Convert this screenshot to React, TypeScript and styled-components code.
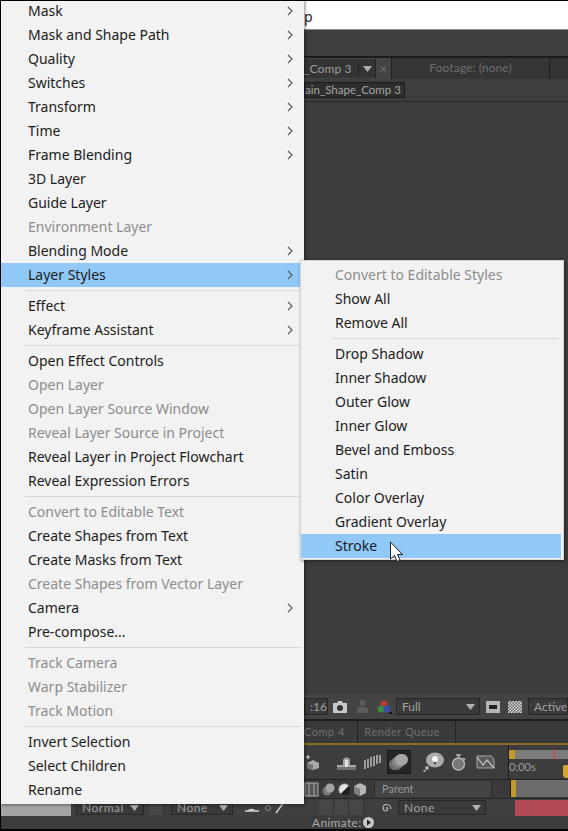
import styled, { createGlobalStyle } from 'styled-components';

const GlobalStyle = createGlobalStyle`
  html, body {
    margin: 0;
    padding: 0;
    background: #3c3c3c;
  }
`;

const Page = styled.div`
  position: relative;
  display: flex;
  flex-direction: column;
  width: 568px;
  height: 831px;
  overflow: hidden;
  background: #3c3c3c;
  font-family: Lato, "Liberation Sans", sans-serif;
  color: #a8a8a8;

  &::after {
    content: "";
    position: absolute;
    inset: 0;
    border-style: solid;
    border-color: #000;
    border-width: 1px 0 2px 1px;
    pointer-events: none;
  }
`;

const TitleBar = styled.div`
  height: 30px;
  padding-left: 304px;
  box-sizing: border-box;
  background: #fff;
  border-bottom: 1px solid #8a8a8a;
  color: #222;
  font-family: "Noto Sans", sans-serif;
  font-size: 14px;
  line-height: 33px;
`;

const PanelStrip = styled.div`
  height: 26px;
  background: #3e3e3e;
  border-bottom: 2px solid #1c1c1c;
`;

const ViewerTabs = styled.div`
  display: flex;
  align-items: stretch;
  height: 21px;
  padding-left: 304px;
  background: #333;
  font-size: 12px;
  letter-spacing: 0.1px;
`;

const ActiveTab = styled.div`
  display: flex;
  align-items: center;
  width: 87px;
  background: #444;
`;

const TabButton = styled.div`
  display: flex;
  align-items: center;
  width: 72px;
  height: 19px;
  background: #343434;
  border-right: 1px solid #222;
  box-sizing: border-box;
  color: #9c9c9c;
`;

const TabName = styled.span`
  width: 44px;
  text-align: right;
  white-space: nowrap;
`;

const TabCaret = styled.span`
  display: flex;
  align-items: center;
  justify-content: center;
  width: 17px;
  height: 12px;
  margin-left: 10px;
  border-left: 1px solid #222;
`;

const TabClose = styled.span`
  margin-left: 4px;
  color: #777;
  font-size: 12px;
`;

const FootageTab = styled.div`
  width: 157px;
  background: #353535;
  border-left: 1px solid #1e1e1e;
  border-right: 1px solid #1e1e1e;
  color: #6d6d6d;
  text-align: center;
  line-height: 20px;
`;

const CrumbRow = styled.div`
  display: flex;
  align-items: center;
  height: 22px;
  padding-left: 304px;
  background: #3e3e3e;
  border-bottom: 1px solid #2b2b2b;
`;

const Crumb = styled.div`
  width: 101px;
  height: 16px;
  box-sizing: border-box;
  padding-right: 7px;
  background: #2e2e2e;
  border: 1px solid #1d1d1d;
  color: #a4a4a4;
  font-size: 11.5px;
  line-height: 13px;
  text-align: right;
  white-space: nowrap;
`;

const Viewer = styled.div`
  flex: 1;
  background: #3c3c3c;
`;

const ViewerBar = styled.div`
  display: flex;
  align-items: center;
  height: 25px;
  padding-left: 304px;
  background: #434343;
  border-bottom: 2px solid #1e1e1e;
  font-size: 12px;
`;

const DarkBox = styled.div<{ $w: number; $ml?: number }>`
  display: flex;
  align-items: center;
  justify-content: space-between;
  width: ${(p) => p.$w}px;
  height: 17px;
  margin-left: ${(p) => p.$ml ?? 0}px;
  box-sizing: border-box;
  padding: 0 4px 0 5px;
  background: #3a3a3a;
  border: 1px solid #272727;
  color: #a0a0a0;
  flex-shrink: 0;
`;

const Slot = styled.span<{ $ml: number }>`
  display: flex;
  flex-shrink: 0;
  margin-left: ${(p) => p.$ml}px;
`;

const BottomTabs = styled.div`
  display: flex;
  align-items: center;
  height: 22px;
  padding-left: 304px;
  background: #3a3a3a;
  border-bottom: 2px solid #8e6b2c;
  color: #6f6f6f;
  font-size: 11px;
  letter-spacing: 0.5px;
`;

const BottomTab = styled.span<{ $w: number }>`
  width: ${(p) => p.$w}px;
  height: 100%;
  box-sizing: border-box;
  flex-shrink: 0;
  border-right: 1px solid #232323;
  line-height: 22px;
  text-align: right;
  padding-right: 15px;
  white-space: nowrap;
`;

const TimelineTools = styled.div`
  display: flex;
  align-items: stretch;
  height: 34px;
  padding-left: 304px;
  background: #3d3d3d;
  border-bottom: 1px solid #222;
`;

const ToolIcons = styled.div`
  display: flex;
  align-items: center;
  width: 204px;
  flex-shrink: 0;
  border-right: 1px solid #1d1d1d;
`;

const ActiveTool = styled.div`
  display: flex;
  align-items: center;
  justify-content: center;
  width: 24px;
  height: 24px;
  margin-left: 5px;
  background: #262626;
  border: 1px solid #1a1a1a;
  box-sizing: border-box;
`;

const Ruler = styled.div`
  position: relative;
  flex: 1;
  display: flex;
  flex-direction: column;
`;

const RulerBar = styled.div`
  display: flex;
  height: 9px;
  margin-top: 5px;
  background: #7c7c7c;
`;

const Handle = styled.div<{ $w: number }>`
  width: ${(p) => p.$w}px;
  background: #c29a2a;
  flex-shrink: 0;
`;

const PlayMark = styled.div`
  margin-left: 38px;
  width: 2px;
  background: #b9545a;
`;

const TimeLabel = styled.span`
  margin-top: 1px;
  color: #9d9d9d;
  font-size: 11px;
`;

const Marker = styled.div`
  position: absolute;
  right: -2px;
  top: 20px;
  width: 7px;
  height: 13px;
  background: #d6a52c;
  border-radius: 3px 3px 5px 5px;
`;

const HeaderRow = styled.div`
  display: flex;
  align-items: stretch;
  height: 18px;
  padding-left: 304px;
  background: #3a3a3a;
  border-bottom: 1px solid #262626;
`;

const Switches = styled.div`
  display: flex;
  align-items: center;
  gap: 3px;
  width: 70px;
  flex-shrink: 0;
`;

const ParentLabel = styled.div`
  width: 118px;
  flex-shrink: 0;
  margin: 1px 16px 1px 0;
  padding-left: 7px;
  box-sizing: border-box;
  background: #444;
  border-left: 1px solid #2a2a2a;
  border-right: 1px solid #2a2a2a;
  color: #9a9a9a;
  font-size: 11px;
  line-height: 16px;
`;

const TrackHead = styled.div`
  flex: 1;
  display: flex;
  margin: 0 0 1px 2px;
  background: #6c6c6c;
  border-left: 1px solid #1c1c1c;
`;

const LayerRow = styled.div`
  display: flex;
  align-items: center;
  height: 17px;
  background: #3f3f3f;
`;

const LayerGrey = styled.div`
  width: 71px;
  height: 100%;
  background: #a4a4a4;
  flex-shrink: 0;
`;

const LayerBox = styled(DarkBox)`
  height: 15px;
  font-size: 12px;
  letter-spacing: 0.5px;
`;

const Check = styled.span`
  width: 14px;
  height: 15px;
  flex-shrink: 0;
  background: #474747;
  border-right: 1px solid #333;
`;

const Squares = styled.div`
  display: flex;
  margin-left: 33px;
`;

const Clip = styled.div`
  flex: 1;
  height: 16px;
  margin-left: 29px;
  background: #b24a55;
`;

const AnimateRow = styled.div`
  display: flex;
  align-items: center;
  height: 13px;
  margin-bottom: 2px;
  padding-left: 312px;
  background: #3c3c3c;
  color: #a8a8a8;
  font-size: 12px;
  letter-spacing: 0.3px;
  gap: 2px;
`;

const Menu = styled.div`
  position: absolute;
  display: flex;
  flex-direction: column;
  box-sizing: border-box;
  background: #f2f2f2;
  font-family: "Noto Sans", "Open Sans", sans-serif;
  font-size: 14px;
  box-shadow: 1px 1px 3px rgba(0, 0, 0, 0.45);
`;

const MainMenu = styled(Menu)`
  left: 1px;
  top: -1px;
  width: 303px;
  height: 805px;
`;

const SubMenu = styled(Menu)`
  left: 300px;
  top: 260px;
  width: 264px;
  height: 300px;
  padding: 2px 2px 0 0;
  border: 1px solid #d4d4d4;
`;

const Row = styled.div<{ $disabled?: boolean; $active?: boolean; $pad: number }>`
  display: flex;
  align-items: center;
  justify-content: space-between;
  flex-shrink: 0;
  box-sizing: border-box;
  height: 24px;
  padding: 0 11px 1px ${(p) => p.$pad}px;
  background: ${(p) => (p.$active ? '#90c8f7' : 'transparent')};
  color: ${(p) => (p.$disabled ? '#8d8d8d' : '#1c1c1c')};
  white-space: nowrap;
`;

const Separator = styled.div<{ $ml: number }>`
  height: 1px;
  margin: 3px 2px 3px ${(p) => p.$ml}px;
  background: #d9d9d9;
`;

const Cursor = styled.svg`
  position: absolute;
  left: 389px;
  top: 541px;
`;

const Chevron = () => (
  <svg width="6" height="10" viewBox="0 0 6 10">
    <path d="M1 1l4 4-4 4" fill="none" stroke="#555" strokeWidth="1.1" />
  </svg>
);

const Caret = ({ color = '#b0b0b0' }: { color?: string }) => (
  <svg width="9" height="6" viewBox="0 0 9 6">
    <path d="M0 0h9L4.5 6z" fill={color} />
  </svg>
);

type MenuItem = { label: string; disabled?: boolean; sub?: boolean; active?: boolean } | 'sep';

const mainItems: MenuItem[] = [
  { label: 'Mask', sub: true },
  { label: 'Mask and Shape Path', sub: true },
  { label: 'Quality', sub: true },
  { label: 'Switches', sub: true },
  { label: 'Transform', sub: true },
  { label: 'Time', sub: true },
  { label: 'Frame Blending', sub: true },
  { label: '3D Layer' },
  { label: 'Guide Layer' },
  { label: 'Environment Layer', disabled: true },
  { label: 'Blending Mode', sub: true },
  { label: 'Layer Styles', sub: true, active: true },
  'sep',
  { label: 'Effect', sub: true },
  { label: 'Keyframe Assistant', sub: true },
  'sep',
  { label: 'Open Effect Controls' },
  { label: 'Open Layer', disabled: true },
  { label: 'Open Layer Source Window', disabled: true },
  { label: 'Reveal Layer Source in Project', disabled: true },
  { label: 'Reveal Layer in Project Flowchart' },
  { label: 'Reveal Expression Errors' },
  'sep',
  { label: 'Convert to Editable Text', disabled: true },
  { label: 'Create Shapes from Text' },
  { label: 'Create Masks from Text' },
  { label: 'Create Shapes from Vector Layer', disabled: true },
  { label: 'Camera', sub: true },
  { label: 'Pre-compose...' },
  'sep',
  { label: 'Track Camera', disabled: true },
  { label: 'Warp Stabilizer', disabled: true },
  { label: 'Track Motion', disabled: true },
  'sep',
  { label: 'Invert Selection' },
  { label: 'Select Children' },
  { label: 'Rename' },
];

const subItems: MenuItem[] = [
  { label: 'Convert to Editable Styles', disabled: true },
  { label: 'Show All' },
  { label: 'Remove All' },
  'sep',
  { label: 'Drop Shadow' },
  { label: 'Inner Shadow' },
  { label: 'Outer Glow' },
  { label: 'Inner Glow' },
  { label: 'Bevel and Emboss' },
  { label: 'Satin' },
  { label: 'Color Overlay' },
  { label: 'Gradient Overlay' },
  { label: 'Stroke', active: true },
];

const renderItems = (items: MenuItem[], pad: number, sepLeft: number) =>
  items.map((item, i) =>
    item === 'sep' ? (
      <Separator key={i} $ml={sepLeft} />
    ) : (
      <Row key={i} $pad={pad} $disabled={item.disabled} $active={item.active}>
        {item.label}
        {item.sub && <Chevron />}
      </Row>
    ),
  );

export default function App() {
  return (
    <Page>
      <GlobalStyle />
      <TitleBar>p</TitleBar>
      <PanelStrip />
      <ViewerTabs>
        <ActiveTab>
          <TabButton>
            <TabName>_Comp 3</TabName>
            <TabCaret>
              <Caret />
            </TabCaret>
          </TabButton>
          <TabClose>×</TabClose>
        </ActiveTab>
        <FootageTab>Footage: (none)</FootageTab>
      </ViewerTabs>
      <CrumbRow>
        <Crumb>ain_Shape_Comp 3</Crumb>
      </CrumbRow>
      <Viewer />
      <ViewerBar>
        <DarkBox $w={24}>:16</DarkBox>
        <Slot $ml={5}>
          <svg width="14" height="12" viewBox="0 0 14 12">
            <path d="M0 2h4l1-2h4l1 2h4v10H0z" fill="#c8c8c8" />
            <circle cx="7" cy="7" r="3" fill="#333" />
          </svg>
        </Slot>
        <Slot $ml={10}>
          <svg width="11" height="13" viewBox="0 0 11 13">
            <circle cx="5.5" cy="3" r="3" fill="#5c5c5c" />
            <path d="M0 13V8.5L3 7h5l3 1.5V13z" fill="#5c5c5c" />
          </svg>
        </Slot>
        <Slot $ml={9}>
          <svg width="15" height="14" viewBox="0 0 15 14">
            <circle cx="7" cy="4" r="3.6" fill="#b53a35" />
            <circle cx="4" cy="9" r="3.6" fill="#3e8a3f" />
            <circle cx="10" cy="9" r="3.6" fill="#3b4fa5" />
            <path d="M12 12h3v2h-3z" fill="#111" />
          </svg>
        </Slot>
        <DarkBox $w={84} $ml={4}>
          Full
          <Caret />
        </DarkBox>
        <Slot $ml={6}>
          <svg width="14" height="12" viewBox="0 0 14 12">
            <path d="M0 0h14v12H0z" fill="#b5b5b5" />
            <path d="M3 4h8v4H3z" fill="#222" />
          </svg>
        </Slot>
        <Slot $ml={8}>
          <svg width="14" height="12" viewBox="0 0 14 12">
            <defs>
              <pattern id="chk" width="3" height="3" patternUnits="userSpaceOnUse">
                <path d="M0 0h3v3H0z" fill="#ddd" />
                <path d="M0 0h1.5v1.5H0zM1.5 1.5H3V3H1.5z" fill="#666" />
              </pattern>
            </defs>
            <path d="M0 0h14v12H0z" fill="url(#chk)" />
          </svg>
        </Slot>
        <DarkBox $w={40} $ml={6}>
          Active
        </DarkBox>
      </ViewerBar>
      <BottomTabs>
        <BottomTab $w={54}>Comp 4</BottomTab>
        <BottomTab $w={98}>Render Queue</BottomTab>
      </BottomTabs>
      <TimelineTools>
        <ToolIcons>
          <Slot $ml={1}>
            <svg width="16" height="16" viewBox="0 0 16 16">
              <path d="M8 6l6 3v5l-6 2-6-2V9z" fill="#a9a9a9" />
              <path d="M8 11v5l-6-2V9z" fill="#757575" />
              <path d="M3 0l.8 2.4L6 3l-2.2.8L3 6l-.8-2.2L0 3l2.2-.6z" fill="#cfcfcf" />
            </svg>
          </Slot>
          <Slot $ml={16}>
            <svg width="19" height="15" viewBox="0 0 19 15">
              <path d="M0 10h6V6a3.5 3.5 0 0 1 7 0v4h6v5H0z" fill="#a6a6a6" />
              <path d="M8 5h3v7H8z" fill="#e2e2e2" />
              <path d="M0 12h19v3H0z" fill="#707070" />
            </svg>
          </Slot>
          <Slot $ml={8}>
            <svg width="18" height="16" viewBox="0 0 18 16">
              <path
                d="M1 6v9M4 5v9M7 3v10M10 2v10M13 1v9M16 1v8"
                stroke="#9c9c9c"
                strokeWidth="2"
                fill="none"
              />
            </svg>
          </Slot>
          <ActiveTool>
            <svg width="20" height="18" viewBox="0 0 20 18">
              <rect x="0" y="6" width="13" height="11" rx="5.5" fill="#6d6d6d" />
              <rect x="3" y="3.5" width="13" height="11" rx="5.5" fill="#888" />
              <rect x="6" y="1" width="13" height="11" rx="5.5" fill="#a6a6a6" />
            </svg>
          </ActiveTool>
          <Slot $ml={12}>
            <svg width="21" height="20" viewBox="0 0 21 20">
              <ellipse cx="12" cy="8" rx="9" ry="7.5" fill="#ababab" />
              <circle cx="12" cy="7" r="3" fill="#f1f1f1" />
              <path d="M11 10h2v2h-2z" fill="#444" />
              <circle cx="4" cy="16" r="2" fill="#ababab" />
              <circle cx="1.5" cy="19" r="1.2" fill="#ababab" />
            </svg>
          </Slot>
          <Slot $ml={7}>
            <svg width="15" height="17" viewBox="0 0 15 17">
              <circle cx="7.5" cy="10" r="6" fill="#767676" stroke="#b5b5b5" strokeWidth="1.5" />
              <path d="M5 1h5M7.5 1v3M12 4l2 2" stroke="#b5b5b5" strokeWidth="1.5" fill="none" />
            </svg>
          </Slot>
          <Slot $ml={10}>
            <svg width="19" height="15" viewBox="0 0 19 15">
              <path d="M1 1h14l3 3v9H1z" fill="#5a5a5a" stroke="#a5a5a5" />
              <path d="M1 2l6 8 4-5 7 8" fill="none" stroke="#c4c4c4" strokeWidth="1.2" />
            </svg>
          </Slot>
        </ToolIcons>
        <Ruler>
          <RulerBar>
            <Handle $w={6} />
            <PlayMark />
          </RulerBar>
          <TimeLabel>0:00s</TimeLabel>
          <Marker />
        </Ruler>
      </TimelineTools>
      <HeaderRow>
        <Switches>
          <svg width="15" height="15" viewBox="0 0 15 15">
            <path d="M1 1h13v13H1z" fill="#555" stroke="#aaa" />
            <path d="M5 1v13M10 1v13" stroke="#aaa" />
          </svg>
          <svg width="13" height="13" viewBox="0 0 13 13">
            <circle cx="5" cy="8" r="4.5" fill="#777" />
            <circle cx="8" cy="5" r="4.5" fill="#a5a5a5" />
          </svg>
          <svg width="13" height="13" viewBox="0 0 13 13">
            <circle cx="6.5" cy="6.5" r="5.5" fill="#e4e4e4" stroke="#bbb" />
            <path d="M11 2.5A5.5 5.5 0 0 1 2.5 11z" fill="#222" />
          </svg>
          <svg width="12" height="13" viewBox="0 0 12 13">
            <path d="M6 0l6 3v7l-6 3-6-3V3z" fill="#b5b5b5" />
            <path d="M6 6v7l-6-3V3z" fill="#808080" />
          </svg>
        </Switches>
        <ParentLabel>Parent</ParentLabel>
        <TrackHead>
          <Handle $w={5} />
        </TrackHead>
      </HeaderRow>
      <LayerRow>
        <LayerGrey />
        <LayerBox $w={68} $ml={5}>
          Normal
          <Caret />
        </LayerBox>
        <Check style={{ marginLeft: 5 }} />
        <LayerBox $w={62} $ml={7}>
          None
          <Caret />
        </LayerBox>
        <Slot $ml={11}>
          <svg width="42" height="13" viewBox="0 0 42 13">
            <path d="M1 10h14M4 10a4 3 0 0 1 7 0" stroke="#cfcfcf" strokeWidth="1.4" fill="#cfcfcf" />
            <circle cx="24" cy="7" r="2.5" fill="none" stroke="#8c8c8c" />
            <path d="M32 12l8-11" stroke="#d8d8d8" strokeWidth="1.4" />
          </svg>
        </Slot>
        <Squares>
          <Check />
          <Check />
          <Check />
        </Squares>
        <Slot $ml={16}>
          <svg width="12" height="12" viewBox="0 0 12 12">
            <path
              d="M6 6.5a1 1 0 0 1 1-1 2 2 0 0 1-1 3.5 3 3 0 0 1-3-3 3.5 3.5 0 0 1 3.5-3.5A4.5 4.5 0 0 1 11 7"
              fill="none"
              stroke="#b5b5b5"
              strokeWidth="1.2"
            />
          </svg>
        </Slot>
        <LayerBox $w={88} $ml={6}>
          None
          <Caret />
        </LayerBox>
        <Clip />
      </LayerRow>
      <AnimateRow>
        Animate:
        <svg width="11" height="11" viewBox="0 0 11 11">
          <circle cx="5.5" cy="5.5" r="5.5" fill="#c9c9c9" />
          <path d="M4 2.5l4 3-4 3z" fill="#222" />
        </svg>
      </AnimateRow>
      <MainMenu>{renderItems(mainItems, 27, 24)}</MainMenu>
      <SubMenu>{renderItems(subItems, 34, 31)}</SubMenu>
      <Cursor width="15" height="23" viewBox="0 0 15 23">
        <path
          d="M1.5 1v17l4-3.5 2.5 6 3-1.3-2.5-5.7h5z"
          fill="#fff"
          stroke="#222"
          strokeWidth="1"
          strokeLinejoin="round"
        />
      </Cursor>
    </Page>
  );
}
